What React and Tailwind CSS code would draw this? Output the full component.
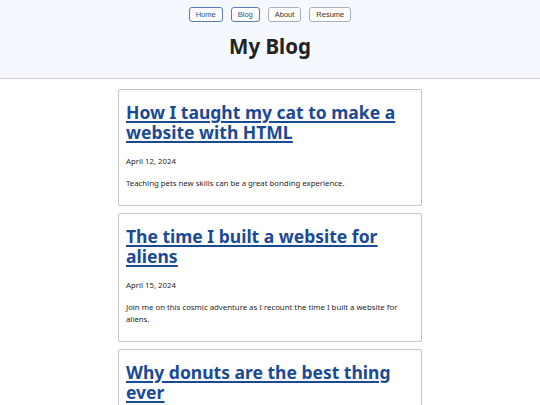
import React from "react";

const links = [
  { label: "Home", active: true },
  { label: "Blog", active: true },
  { label: "About", active: false },
  { label: "Resume", active: false },
];

const posts = [
  {
    title: "How I taught my cat to make a website with HTML",
    date: "April 12, 2024",
    text: "Teaching pets new skills can be a great bonding experience.",
  },
  {
    title: "The time I built a website for aliens",
    date: "April 15, 2024",
    text: "Join me on this cosmic adventure as I recount the time I built a website for aliens.",
  },
  {
    title: "Why donuts are the best thing ever",
    date: "April 18, 2024",
    text: "A deep dive into the sweet, sugary world of donuts.",
  },
];

export default function App() {
  return (
    <div className="min-h-[405px] bg-white font-['Noto_Sans',sans-serif] text-[#222]">
      {/* header */}
      <header className="bg-[#f5f8ff] border-b border-[#c9ccd4] h-[79px] pt-[7px]">
        <nav className="flex justify-center gap-[8px]">
          {links.map((l) => (
            <button
              key={l.label}
              className={
                "h-[15px] px-[6px] rounded-[3px] border bg-white text-[7.5px] leading-none font-['Liberation_Sans',sans-serif] " +
                (l.active
                  ? "border-[#5a7bb5] text-[#2a4f92]"
                  : "border-[#aab0bb] text-[#333]")
              }
            >
              {l.label}
            </button>
          ))}
        </nav>
        <h1 className="text-center text-[20.5px] font-bold leading-none mt-[14px] text-[#222]">
          My Blog
        </h1>
      </header>

      {/* posts */}
      <main className="w-[304px] mx-auto pt-[10px] flex flex-col gap-[7px]">
        {posts.map((p, i) => (
          <article
            key={i}
            className="border border-[#c4c4c4] rounded-[2px] px-[7px] pt-[12px] pb-[16px]"
          >
            <h2 className="text-[17.5px] leading-[20px] font-bold text-[#1a4a96] underline underline-offset-[2px] decoration-[2px]">
              <a href="#">{p.title}</a>
            </h2>
            <p className="text-[7.8px] leading-[12px] mt-[13px] text-[#1f1f1f]">{p.date}</p>
            <p className="text-[7.8px] leading-[12px] mt-[10px] text-[#1f1f1f]">{p.text}</p>
          </article>
        ))}
      </main>
    </div>
  );
}
